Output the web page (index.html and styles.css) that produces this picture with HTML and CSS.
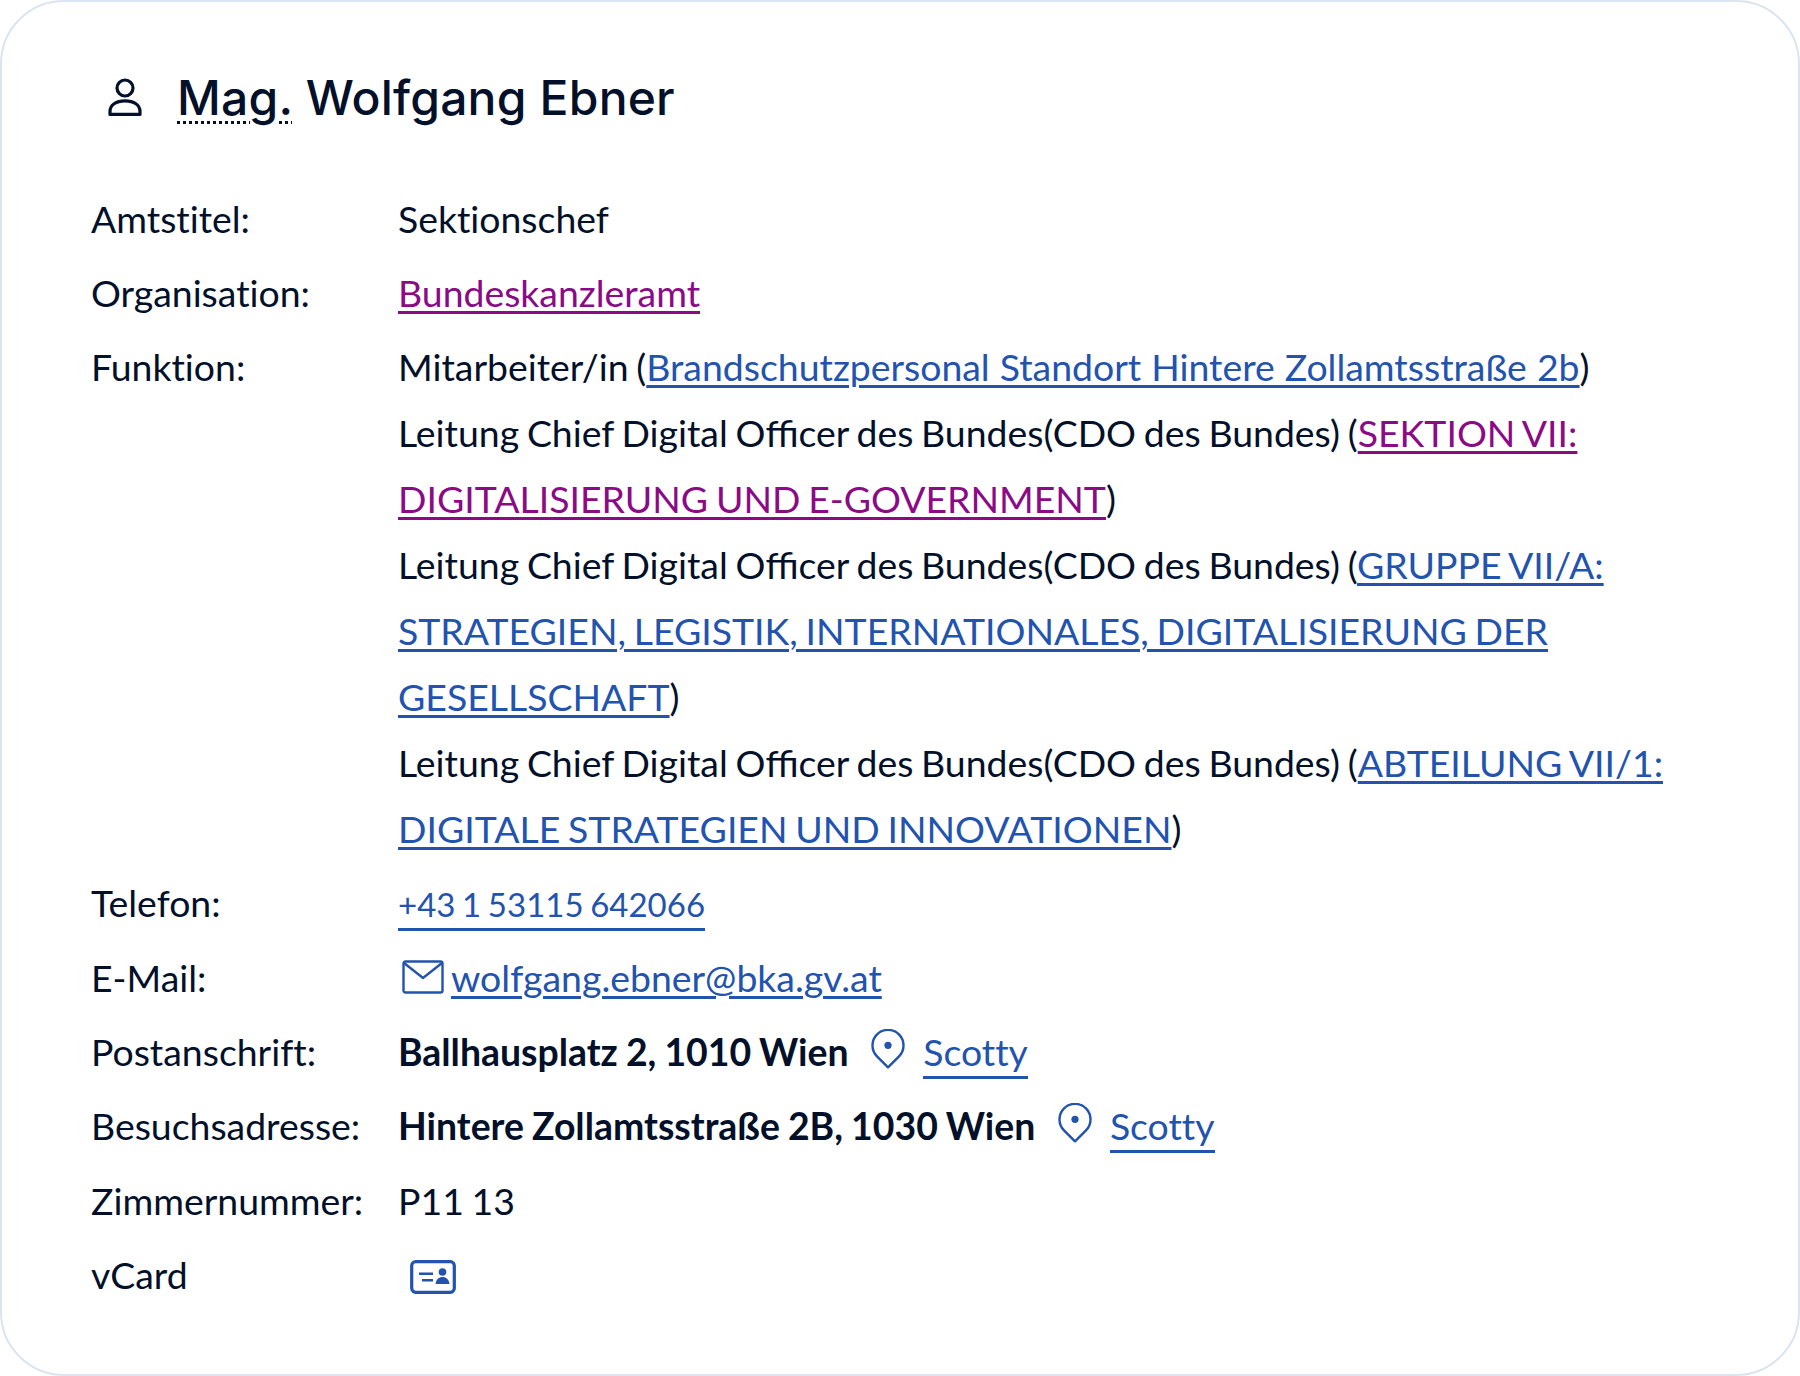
FILE: index.html
```html
<!DOCTYPE html>
<html lang="de">
    <head>
        <meta charset="UTF-8" />
        <meta name="viewport" content="width=device-width, initial-scale=1.0" />
        <title>Mag. Wolfgang Ebner</title>
        <link rel="stylesheet" href="styles.css">
    </head>
    <body>
        <div class="card">
            <h2 class="card-title">
                <svg class="icon-person" viewBox="0 0 34 38" fill="none" stroke="currentColor" stroke-width="3.2" aria-hidden="true">
                    <circle cx="17" cy="10" r="8" />
                    <path d="M2 36.400v-3c0-6.500 6-10.500 15-10.500s15 4 15 10.500v3z" stroke-linejoin="round" />
                </svg>
                <span><abbr class="title-abbr">Mag.</abbr> Wolfgang Ebner</span>
            </h2>
            <dl class="details">
                <dt>Amtstitel:</dt>
                <dd>Sektionschef</dd>

                <dt>Organisation:</dt>
                <dd><a class="visited" href="#">Bundeskanzleramt</a></dd>

                <dt>Funktion:</dt>
                <dd>
                    Mitarbeiter/in (<a class="link-wide" href="#">Brandschutzpersonal Standort Hintere Zollamtsstraße 2b</a>)<br>
                    Leitung Chief Digital O<span class="lig">ffi</span>cer des Bundes(CDO des Bundes) (<a class="visited" href="#">SEKTION VII: DIGITALISIERUNG UND E-GOVERNMENT</a>)<br>
                    Leitung Chief Digital O<span class="lig">ffi</span>cer des Bundes(CDO des Bundes) (<a href="#">GRUPPE VII/A: STRATEGIEN, LEGISTIK, INTERNATIONALES, DIGITALISIERUNG DER GESELLSCHAFT</a>)<br>
                    Leitung Chief Digital O<span class="lig">ffi</span>cer des Bundes(CDO des Bundes) (<a href="#">ABTEILUNG VII/1: DIGITALE STRATEGIEN UND INNOVATIONEN</a>)
                </dd>

                <dt>Telefon:</dt>
                <dd><a class="link-plain phone" href="#">+43 1 53115 642066</a></dd>

                <dt>E-Mail:</dt>
                <dd>
                    <svg class="icon-mail" viewBox="0 0 42 34" fill="none" stroke="currentColor" stroke-width="2.400" aria-hidden="true">
                        <rect x="1.500" y="1.500" width="39" height="31" rx="2" />
                        <path d="M2 3l19 15 19-15" />
                    </svg>
                    <a href="#">wolfgang.ebner@bka.gv.at</a>
                </dd>

                <dt>Postanschrift:</dt>
                <dd class="address">
                    <strong>Ballhausplatz 2, 1010 Wien</strong>
                    <svg class="icon-pin" viewBox="0 0 34 40" fill="none" stroke="currentColor" stroke-width="2.400" aria-hidden="true">
                        <path d="M17 38.300 6 27.300a15.500 15.500 0 1 1 22 0z" stroke-linejoin="round" />
                        <circle cx="17" cy="16.300" r="3.600" fill="currentColor" stroke="none" />
                    </svg>
                    <a class="link-plain" href="#">Scotty</a>
                </dd>

                <dt>Besuchsadresse:</dt>
                <dd class="address">
                    <strong>Hintere Zollamtsstraße 2B, 1030 Wien</strong>
                    <svg class="icon-pin" viewBox="0 0 34 40" fill="none" stroke="currentColor" stroke-width="2.400" aria-hidden="true">
                        <path d="M17 38.300 6 27.300a15.500 15.500 0 1 1 22 0z" stroke-linejoin="round" />
                        <circle cx="17" cy="16.300" r="3.600" fill="currentColor" stroke="none" />
                    </svg>
                    <a class="link-plain" href="#">Scotty</a>
                </dd>

                <dt>Zimmernummer:</dt>
                <dd>P11 13</dd>

                <dt>vCard</dt>
                <dd>
                    <a class="vcard" href="#" aria-label="vCard">
                        <svg class="icon-vcard" viewBox="0 0 46 34" aria-hidden="true">
                            <rect x="1.700" y="1.700" width="42.600" height="30.600" rx="4" fill="none" stroke="currentColor" stroke-width="3.200" />
                            <path d="M9 12.500h14v2.600H9zM12 19h11v2.600H12z" fill="currentColor" />
                            <circle cx="32.500" cy="12" r="3.800" fill="currentColor" />
                            <path d="M25.500 24c.5-4.500 3.500-7 7-7s6.500 2.500 7 7z" fill="currentColor" />
                        </svg>
                    </a>
                </dd>
            </dl>
        </div>
    </body>
</html>
```

FILE: styles.css
```css
* {
    margin: 0;
    padding: 0;
    box-sizing: border-box;
}

body {
    font-family: 'Lato', 'Liberation Sans', sans-serif;
    background-color: white;
    color: #03102a;
}

.card {
    width: 1800px;
    height: 1376px;
    padding: 59px 89px 0;
    background-color: white;
    border: 2px solid #dbe4f1;
    border-radius: 64px;
}

.card-title {
    display: flex;
    align-items: center;
    gap: 35px;
    height: 72px;
    padding-left: 17px;
    font-family: 'Inter', sans-serif;
    font-size: 48px;
    font-weight: 500;
    letter-spacing: 0.2px;
}

.icon-person {
    width: 34px;
    height: 38px;
    flex: none;
}

.title-abbr {
    text-decoration: underline dotted 3.400px;
    text-underline-offset: 6px;
}

.details {
    display: grid;
    grid-template-columns: 307px 1fr;
    row-gap: 8.300px;
    margin-top: 52.600px;
    font-size: 37.400px;
    line-height: 66px;
    font-variant-ligatures: none;
    word-spacing: -1.800px;
}

/* only the ffi ligature shows in the original */
.lig {
    font-variant-ligatures: normal;
}

strong {
    word-spacing: -1px;
}

a {
    color: #2253ae;
    text-decoration-thickness: 3px;
    text-underline-offset: 4px;
}

a.visited {
    color: #8b0a86;
}

.link-wide {
    word-spacing: 0.500px;
}

.link-plain {
    display: inline-block;
    line-height: 48px;
    border-bottom: 3px solid #2253ae;
    text-decoration: none;
}

.phone {
    font-size: 33px;
}

.icon-mail {
    width: 42px;
    height: 34px;
    margin-left: 4px;
    color: #2253ae;
    vertical-align: -2px;
}

.icon-pin {
    width: 34px;
    height: 40px;
    margin: 0 10px 0 15px;
    color: #2253ae;
    vertical-align: -3px;
}

.vcard {
    display: inline-block;
    margin-left: 12px;
}

.icon-vcard {
    width: 46px;
    height: 34px;
    vertical-align: -5px;
}
```
